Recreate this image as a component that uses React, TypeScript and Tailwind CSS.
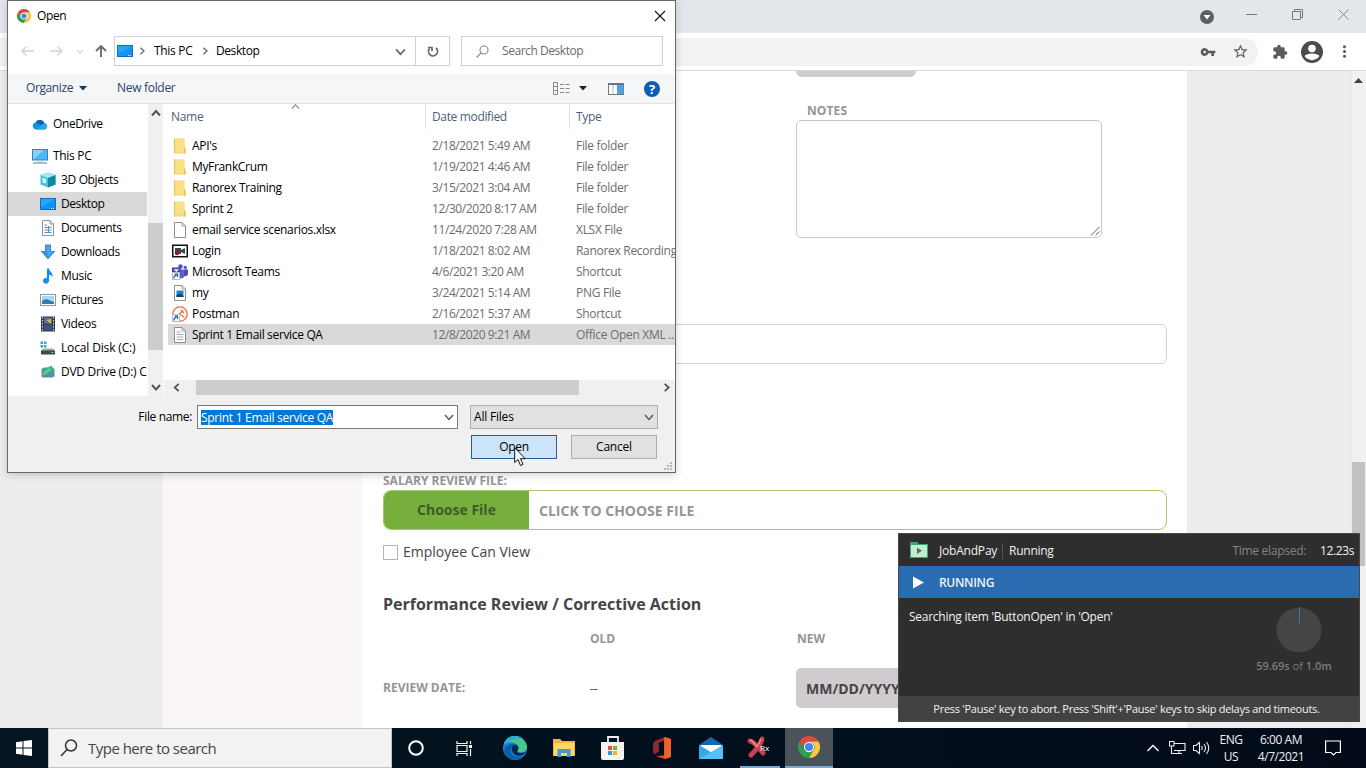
import type { ReactNode } from "react";
import { MdVpnKey, MdStarBorder, MdExtension, MdMoreVert } from "react-icons/md";

function Chrome({ size }: { size: number }) {
  return (
    <svg width={size} height={size} viewBox="0 0 24 24">
      <path fill="#de4a3e" d="M1.6 6A12 12 0 0 1 22.4 6L12 6A6 6 0 0 0 6.8 15Z" />
      <path fill="#2ba24c" d="M1.6 6L6.8 15A6 6 0 0 0 17.2 15L12 24A12 12 0 0 1 1.6 6" />
      <path fill="#fbcb3b" d="M22.4 6A12 12 0 0 1 12 24L17.2 15A6 6 0 0 0 12 6Z" />
      <circle cx="12" cy="12" r="5.6" fill="#fff" />
      <circle cx="12" cy="12" r="4.4" fill="#4285f4" />
    </svg>
  );
}

function Chevron({ dir, color = "#555", size = 9, w = 1.6 }: { dir: "up" | "down" | "left" | "right"; color?: string; size?: number; w?: number }) {
  const d = { up: "M1 7.5L5 3L9 7.5", down: "M1 3L5 7.5L9 3", left: "M7.5 1L3 5L7.5 9", right: "M3 1L7.5 5L3 9" }[dir];
  return (
    <svg width={size} height={size} viewBox="0 0 10 10" fill="none" stroke={color} strokeWidth={w}>
      <path d={d} />
    </svg>
  );
}

function Icon({ children }: { children: ReactNode }) {
  return (
    <svg className="shrink-0" width="16" height="16" viewBox="0 0 16 16">
      {children}
    </svg>
  );
}

const desktopIcon = (
  <Icon>
    <rect x="0" y="2" width="16" height="12" fill="#0d6fc0" />
    <rect x="1" y="3" width="14" height="10" fill="#1494f2" />
    <path d="M1 3H15L1 11Z" fill="#23a7f8" />
    <path d="M11 12.5H12M13 12.5H14" stroke="#fff" strokeWidth="1" />
  </Icon>
);
const oneDriveIcon = (
  <Icon>
    <path d="M4 13.5a3.6 3.6 0 0 1-.4-7.1A5 5 0 0 1 12.400 7 3.400 3.400 0 0 1 13 13.500Z" fill="#1490df" />
    <path d="M3.600 6.400A5 5 0 0 1 12.400 7L9 9Z" fill="#0f5fb4" />
    <path d="M4 13.500L12.400 7.200A3.400 3.400 0 0 1 13 13.500Z" fill="#28a8ea" />
  </Icon>
);
const pcIcon = (
  <Icon>
    <rect x="0.5" y="1.5" width="15" height="10.5" fill="#4db8f5" stroke="#3285b8" />
    <path d="M1 2H12L2 11H1Z" fill="#87d2fb" />
    <path d="M1 15H15" stroke="#557997" />
    <path d="M5 13H11" stroke="#b2c4d0" />
  </Icon>
);
const cubeIcon = (
  <Icon>
    <path d="M8 0.5L15.500 3V12.500L8 15.500L0.500 12.500V3Z" fill="#3fc4d6" />
    <path d="M8 0.5L15.500 3L8 6L0.500 3Z" fill="#a4e9f2" />
    <path d="M8 6L15.500 3V12.500L8 15.500Z" fill="#0e87a0" />
    <path d="M2.500 5.500L6 7V11.500L2.500 10.500Z" fill="#d5f7fa" />
  </Icon>
);
const documentsIcon = (
  <Icon>
    <path d="M2.5 0.5H10L13.5 4V15.5H2.5Z" fill="#fdfdfd" stroke="#8a9299" />
    <path d="M10 0.5V4H13.5" fill="none" stroke="#8a9299" />
    <path d="M4.5 5H7M4.5 7.5H11.5M4.5 10H11.5M4.5 12.5H11.5M8.5 6V13" stroke="#4294cb" />
  </Icon>
);
const downloadIcon = (
  <Icon>
    <path d="M5 0.5H11V7H15.5L8 15.5L0.5 7H5Z" fill="#3a8fd8" />
    <path d="M6 1.5H10V8H13L8 13.5Z" fill="#4aa5ea" />
  </Icon>
);
const musicIcon = (
  <Icon>
    <path d="M7 0.5H9C9.5 4 13.5 4.5 12.5 9.5C12 7.5 11 7 9 7V12.5A3 3 0 1 1 7 10Z" fill="#1490ea" />
  </Icon>
);
const picturesIcon = (
  <Icon>
    <rect x="0.5" y="2.5" width="15" height="11" fill="#fff" stroke="#8c9aa5" />
    <rect x="2" y="4" width="12" height="8" fill="#a8d7f5" />
    <path d="M2 9L6 7L14 10V12H2Z" fill="#3679ad" />
  </Icon>
);
const videosIcon = (
  <Icon>
    <rect x="1" y="0.5" width="14" height="15" fill="#353b45" />
    <path d="M2.5 1V16M13.5 1V16" stroke="#d8dde2" strokeDasharray="1.5 1.5" />
    <rect x="4" y="1.5" width="8" height="6" fill="#566c9e" />
    <rect x="4" y="8.5" width="8" height="6" fill="#3d5080" />
    <path d="M6 4L11 3V8Z" fill="#e2b33f" />
  </Icon>
);
const diskIcon = (
  <Icon>
    <path d="M0.5 1.5H3V4H0.5ZM4 1.5H6.5V4H4ZM0.5 5H3V7.5H0.5ZM4 5H6.5V7.5H4Z" fill="#22add0" />
    <path d="M3 8.5H13L15 11H1Z" fill="#a3a9ad" />
    <rect x="1" y="10.5" width="14" height="4" fill="#43484d" />
    <rect x="11.5" y="12" width="2" height="1" fill="#6be86d" />
  </Icon>
);
const dvdIcon = (
  <Icon>
    <path d="M1.500 5L4 3.500H12L14.500 5V12.500L12 13.500H2.500L1.500 12.500Z" fill="#5a8f9e" />
    <path d="M3 8C4 3.500 8 4.500 11 1.500L12.500 2.500C13 7 9 11 4 9.500Z" fill="#35c07c" />
    <path d="M3 11L10 5" stroke="#8eebc0" strokeWidth="0.900" />
  </Icon>
);

const folderIcon = (
  <Icon>
    <path d="M2 0.5H12.5V10L14 11V15.5H2Z" fill="#f4d26d" />
    <path d="M3 1H12V14.5H3Z" fill="#fbdf85" />
    <path d="M2.500 15.500V0.500M12.500 9V15.500" stroke="#e6c25e" fill="none" />
  </Icon>
);
const sheet = (
  <>
    <path d="M2.5 0.5H10L13.5 4V15.5H2.5Z" fill="#fff" stroke="#8e8e8e" />
    <path d="M10 0.5V4H13.5" fill="none" stroke="#a0a0a0" />
  </>
);
const shortcutMark = (
  <>
    <rect x="0.5" y="8.5" width="7" height="7" fill="#fff" stroke="#bbb" />
    <path d="M2 14.5V13L4.5 10.5M2.5 10H5.5V13" fill="none" stroke="#1f5aa8" strokeWidth="1.2" />
  </>
);
const recIcon = (
  <Icon>
    <rect x="0.75" y="2.25" width="14.5" height="11.5" fill="#fff" stroke="#111" strokeWidth="1.5" />
    <path d="M3 5H9V7L13 5V11L9 9V11H3Z" fill="#444" />
    <circle cx="5" cy="10" r="2.2" fill="#8c1830" />
  </Icon>
);
const teamsIcon = (
  <Icon>
    <circle cx="8.5" cy="2.6" r="2.3" fill="#5059c9" />
    <circle cx="13.3" cy="3.4" r="1.7" fill="#5059c9" />
    <path d="M6 5.5H12.5V12A4 4 0 0 1 5 12Z" fill="#5c62cf" />
    <path d="M12 5.5H16V10A3 3 0 0 1 12 12Z" fill="#444bb0" />
    <rect x="0" y="3.5" width="8.5" height="8.5" fill="#3c43a5" />
    <path d="M2 5.8H6.6M4.3 5.8V10.5" stroke="#fff" strokeWidth="1.2" />
    {shortcutMark}
  </Icon>
);
const pngIcon = (
  <Icon>
    {sheet}
    <rect x="4.5" y="5.5" width="7" height="6.5" fill="#1f82cc" />
    <path d="M4.5 12V10L8 8.5L11.5 11V12Z" fill="#153e66" />
  </Icon>
);
const postmanIcon = (
  <Icon>
    <circle cx="8" cy="8" r="7.2" fill="#fff" stroke="#ec6b3d" strokeWidth="1.3" />
    <path d="M5 10.5L11 4.5M8.5 8.5L12.5 11.5M9 4L12 7" stroke="#ec6b3d" strokeWidth="1.3" />
    {shortcutMark}
  </Icon>
);
const textIcon = (
  <Icon>
    {sheet}
    <path d="M4.5 5H9M4.5 7.5H11.5M4.5 10H11.5M4.5 12.5H11.5" stroke="#a3acb3" />
  </Icon>
);

const places: [ReactNode, string, string][] = [
  [cubeIcon, "3D Objects", "tracking-[-0.35px]"],
  [desktopIcon, "Desktop", "tracking-[-0.42px]"],
  [documentsIcon, "Documents", "tracking-[-0.42px]"],
  [downloadIcon, "Downloads", "tracking-[-0.42px]"],
  [musicIcon, "Music", "tracking-[-0.32px]"],
  [picturesIcon, "Pictures", "tracking-[-0.36px]"],
  [videosIcon, "Videos", "tracking-[-0.32px]"],
  [diskIcon, "Local Disk (C:)", "tracking-[-0.15px]"],
  [dvdIcon, "DVD Drive (D:) C", "tracking-[-0.27px]"],
];

const files: [ReactNode, string, string, string][] = [
  [folderIcon, "API's", "2/18/2021 5:49 AM", "File folder"],
  [folderIcon, "MyFrankCrum", "1/19/2021 4:46 AM", "File folder"],
  [folderIcon, "Ranorex Training", "3/15/2021 3:04 AM", "File folder"],
  [folderIcon, "Sprint 2", "12/30/2020 8:17 AM", "File folder"],
  [<Icon>{sheet}</Icon>, "email service scenarios.xlsx", "11/24/2020 7:28 AM", "XLSX File"],
  [recIcon, "Login", "1/18/2021 8:02 AM", "Ranorex Recording"],
  [teamsIcon, "Microsoft Teams", "4/6/2021 3:20 AM", "Shortcut"],
  [pngIcon, "my", "3/24/2021 5:14 AM", "PNG File"],
  [postmanIcon, "Postman", "2/16/2021 5:37 AM", "Shortcut"],
  [textIcon, "Sprint 1 Email service QA", "12/8/2020 9:21 AM", "Office Open XML ..."],
];

function OpenDialog() {
  return (
    <section className="absolute left-[7px] top-0 flex h-[473px] w-[669px] flex-col overflow-hidden border border-[#68686c] bg-white text-[12px] leading-4 tracking-[-0.3px] text-black shadow-[0_2px_8px_rgba(0,0,0,0.18)]">
      <header className="flex h-[29px] shrink-0 items-center pl-[9px] pr-[9px]">
        <Chrome size={14} />
        <span className="ml-[6px] grow tracking-[-0.4px]">Open</span>
        <svg width="12" height="12" viewBox="0 0 12 12" stroke="#111" strokeWidth="1.1"><path d="M1 1L11 11M11 1L1 11" /></svg>
      </header>
      <div className="mt-[6px] flex h-[30px] shrink-0 items-center">
        <svg className="ml-[12px]" width="94" height="16" viewBox="0 0 94 16" fill="none">
          <path d="M14 8H2M6.5 3.5L2 8L6.5 12.5" stroke="#d4d4d4" strokeWidth="1.4" />
          <path d="M30 8H42M37.500 3.500L42 8L37.500 12.500" stroke="#d4d4d4" strokeWidth="1.400" />
          <path d="M57 7L60 10L63 7" stroke="#d8d8d8" strokeWidth="1.400" />
          <path d="M81 14V3M76 8L81 3L86 8" stroke="#6a6a6a" strokeWidth="1.900" />
        </svg>
        <div className="flex h-[30px] w-[336px] items-center border border-[#d0d0d0]">
          <span className="ml-[2px]">{desktopIcon}</span>
          <span className="ml-[5px] flex w-[16px]"><Chevron dir="right" color="#666" size={8} /></span>
          <span className="w-[47px]">This PC</span>
          <span className="flex w-[15px]"><Chevron dir="right" color="#666" size={8} /></span>
          <span className="grow tracking-[-0.42px]">Desktop</span>
          <Chevron dir="down" color="#666" size={11} />
          <span className="ml-[9px] flex h-full w-[34px] items-center justify-center border-l border-[#d0d0d0]">
            <svg width="12" height="12" viewBox="0 0 12 12" fill="none" stroke="#666" strokeWidth="1.700">
              <path d="M2.500 3.500A4.500 4.500 0 1 0 9 3M1 2.500H5V6" />
            </svg>
          </span>
        </div>
        <div className="ml-[11px] flex h-[30px] w-[202px] items-center border border-[#d0d0d0] text-[#6b6b6b]">
          <svg className="ml-[14px] mr-[13px]" width="13" height="13" viewBox="0 0 13 13" fill="none" stroke="#888" strokeWidth="1.100">
            <circle cx="8" cy="5" r="4" /><path d="M5 8L0.500 12.500" />
          </svg>
          <span className="tracking-[-0.45px]">Search Desktop</span>
        </div>
      </div>
      <div className="mt-2 flex h-[30px] shrink-0 items-center border-b border-[#e2e4e6] bg-[#f5f6f7] text-[#2a4468]">
        <span className="ml-[18px] w-[53px] -translate-y-px tracking-[-0.4px]">Organize</span>
        <svg width="8" height="5" viewBox="0 0 8 5"><path d="M0 0H8L4 4.500Z" fill="#1c3659" /></svg>
        <span className="ml-[30px] grow -translate-y-px tracking-[-0.3px]">New folder</span>
        <svg width="17" height="13" viewBox="0 0 17 13" fill="none" stroke="#888">
          <path d="M0.500 0.500H4.500V12.500H0.500ZM0.500 4.500H4.500M0.500 8.500H4.500" />
          <path d="M7 2.500H17M7 6.500H17M7 10.500H17" strokeDasharray="4 1.500" />
        </svg>
        <svg className="ml-[9px]" width="8" height="5" viewBox="0 0 8 5"><path d="M0 0H8L4 4.500Z" fill="#222" /></svg>
        <svg className="ml-[21px]" width="17" height="12" viewBox="0 0 17 12">
          <rect x="0.500" y="0.500" width="15" height="11" fill="#fff" stroke="#777" />
          <path d="M0 1.500H16" stroke="#56748c" />
          <path d="M5 2V11" stroke="#bbb" />
          <rect x="9" y="2" width="6.500" height="9" fill="#4da3e2" />
        </svg>
        <span className="ml-[19px] mr-[15px] flex size-4 items-center justify-center rounded-full bg-[#0b5cb5] text-[13px] font-bold text-white">?</span>
      </div>
      <div className="flex h-[292px] shrink-0">
        <nav className="w-[139px] shrink-0 overflow-hidden whitespace-nowrap pt-2">
          <div className="flex h-6 items-center gap-[5px] pl-6">{oneDriveIcon}<span className="tracking-[-0.4px]">OneDrive</span></div>
          <div className="mt-2 flex h-6 items-center gap-[5px] pl-6">{pcIcon}<span>This PC</span></div>
          {places.map(([icon, name, track]) => (
            <div key={name} className={`flex h-6 items-center gap-[5px] pl-8 ${name === "Desktop" ? "bg-[#d9d9d9]" : ""}`}>
              {icon}<span className={track}>{name}</span>
            </div>
          ))}
        </nav>
        <div className="ml-[1px] flex w-[15px] shrink-0 flex-col items-center bg-[#f0f0f0] py-1">
          <Chevron dir="up" size={10} w={2} />
          <div className="mt-[105px] h-[127px] w-full bg-[#cdcdcd]" />
          <div className="mt-auto flex"><Chevron dir="down" size={10} w={2} /></div>
        </div>
        <div className="relative ml-[1px] flex min-w-0 grow flex-col">
          <div className="absolute left-[127px] top-[-2px]"><Chevron dir="up" size={9} color="#777" w={1.200} /></div>
          <div className="flex h-[25px] items-stretch text-[#4c607a]">
            <span className="w-[262px] border-r border-[#e0e0e0] pl-[7px] pt-[5px] tracking-[-0.3px]">Name</span>
            <span className="w-[144px] border-r border-[#e0e0e0] pl-[6px] pt-[5px] tracking-[-0.35px]">Date modified</span>
            <span className="pl-[6px] pt-[5px]">Type</span>
          </div>
          <ul className="pt-[6px]">
            {files.map(([icon, name, date, type], i) => (
              <li key={name} className={`ml-1 flex h-[21px] items-center whitespace-nowrap ${i === 9 ? "bg-[#d9d9d9]" : ""}`}>
                <span className="ml-1">{icon}</span>
                <span className="ml-1 w-[240px] shrink-0 tracking-[-0.34px]">{name}</span>
                <span className="w-[144px] shrink-0 tracking-[-0.41px] text-[#6d6d6d]">{date}</span>
                <span className="tracking-[-0.3px] text-[#6d6d6d]">{type}</span>
              </li>
            ))}
          </ul>
          <div className="mt-auto flex h-4 items-start bg-[#f0f0f0] pl-2 pr-1">
            <span className="mt-[3px] flex"><Chevron dir="left" size={9} w={2} /></span>
            <div className="ml-[15px] h-[15px] w-[383px] bg-[#cdcdcd]" />
            <div className="ml-auto mt-[3px] flex"><Chevron dir="right" size={9} w={2} /></div>
          </div>
        </div>
      </div>
      <footer className="relative grow bg-[#f0f0f0] pt-[9px]">
        <div className="flex items-center">
          <label className="w-[184px] text-right tracking-[-0.35px]">File name:</label>
          <div className="ml-[5px] flex h-6 w-[261px] items-center border border-[#7a7a7a] bg-white pl-[3px] pr-[3px]">
            <span className="mt-px bg-[#0078d7] leading-[15px] tracking-[-0.28px] text-white">Sprint 1 Email service QA</span>
            <span className="ml-auto"><Chevron dir="down" size={10} w={1.300} /></span>
          </div>
          <div className="ml-[12px] flex h-6 w-[188px] items-center justify-between border border-[#adadad] bg-[#e1e1e1] pl-[3px] pr-[3px]">
            <span className="tracking-[-0.2px]">All Files</span><Chevron dir="down" size={10} w={1.300} />
          </div>
        </div>
        <div className="mt-[6px] flex pl-[463px]">
          <button className="h-6 w-[86px] border border-[#2a5c92] bg-[#cce4f7] leading-[14px] tracking-[-0.3px]">Open</button>
          <button className="ml-[14px] h-6 w-[86px] border border-[#adadad] bg-[#e1e1e1] leading-[14px] tracking-[-0.2px]">Cancel</button>
        </div>
        <svg className="absolute bottom-[1px] right-[2px]" width="9" height="9" viewBox="0 0 9 9" fill="#b8b8b8">
          <path d="M6 0H8V2H6ZM3 3H5V5H3ZM6 3H8V5H6ZM0 6H2V8H0ZM3 6H5V8H3ZM6 6H8V8H6Z" />
        </svg>
      </footer>
    </section>
  );
}

function RunnerPanel() {
  return (
    <section className="absolute left-[898px] top-[533px] flex h-[189px] w-[462px] flex-col border border-[#484848] bg-[#2e2e2e] text-[12px] leading-4 text-[#f2f2f2]">
      <header className="flex h-8 shrink-0 items-center pl-[11px] pr-[5px] pt-px">
        <svg className="-mt-[3px]" width="18" height="17" viewBox="0 0 18 17">
          <path d="M0 1H7L9 3H18V17H0Z" fill="#3aa76d" /><rect x="1" y="4" width="16" height="12" fill="#c4ecd3" />
          <path d="M7 6.500V13L12 9.700Z" fill="#49795c" />
        </svg>
        <span className="ml-[11px] w-[64px] border-r border-[#555] tracking-[-0.2px]">JobAndPay</span>
        <span className="ml-[6px] grow tracking-[-0.25px]">Running</span>
        <span className="mr-[14px] tracking-[-0.28px] text-[#858585]">Time elapsed:</span>
        <span className="tracking-[-0.4px]">12.23s</span>
      </header>
      <div className="flex h-8 shrink-0 items-center bg-[#2a6cb2] pl-[14px]">
        <svg width="11" height="13" viewBox="0 0 11 13"><path d="M0 0.500V12.500L11 6.500Z" fill="#fff" /></svg>
        <span className="ml-[15px] mt-px font-semibold tracking-[-0.300px]">RUNNING</span>
      </div>
      <div className="flex grow justify-between pl-[10px] pt-[9px]">
        <span className="pt-[2px] tracking-[-0.26px]">Searching item 'ButtonOpen' in 'Open'</span>
        <div className="flex w-[120px] flex-col items-center text-[11px] font-semibold text-[#7c7c7c]">
          <svg width="46" height="46" viewBox="0 0 46 46"><circle cx="23" cy="23" r="22.500" fill="#454545" /><path d="M23.500 0V16" stroke="#397ba8" /></svg>
          <span className="mr-[10px] mt-[5px]">59.69s <span className="font-normal">of</span> 1.0m</span>
        </div>
      </div>
      <footer className="flex h-[25px] shrink-0 items-center justify-center bg-[#424242] text-[11px] tracking-[-0.27px]">
        <span className="-ml-[5px]">Press 'Pause' key to abort. Press 'Shift'+'Pause' keys to skip delays and timeouts.</span>
      </footer>
    </section>
  );
}

function BrowserChrome() {
  return (
    <>
      <div className="flex h-[33px] shrink-0 items-start justify-end bg-[#e2e7ec] pt-[9px] text-[#777]">
        <svg width="14" height="15" viewBox="0 0 14 15"><circle cx="7" cy="8" r="7" fill="#5c6064" /><path d="M3.500 6H10.500L7 10.500Z" fill="#fff" /></svg>
        <svg className="ml-[32px] mt-[5px]" width="11" height="1"><path d="M0 0.500H11" stroke="#777" /></svg>
        <svg className="ml-[35px]" width="11" height="11" fill="none" stroke="#777"><path d="M0.500 2.500H8.500V10.500H0.500ZM2.500 2V0.500H10.500V8.500H9" /></svg>
        <svg className="ml-[35px] mr-[17px]" width="11" height="11" stroke="#888"><path d="M0.500 0.500L10.500 10.500M10.500 0.500L0.500 10.500" /></svg>
      </div>
      <div className="flex h-[38px] shrink-0 items-center border-b border-[#d9d9d9] bg-white pr-[14px] text-[#5b5b5b]">
        <div className="flex h-[28px] grow items-center justify-end gap-4 rounded-r-full bg-[#f2f2f2] pr-[9px]">
          <MdVpnKey size={16} /><MdStarBorder size={17} />
        </div>
        <MdExtension className="ml-[14px]" size={16} />
        <svg className="ml-[13px]" width="22" height="22" viewBox="0 0 22 22">
          <circle cx="11" cy="11" r="11" fill="#4c4c4c" /><circle cx="11" cy="7.500" r="3.800" fill="#fff" />
          <path d="M3.500 15C6 11.500 16 11.500 18.500 15C15 20.500 7 20.500 3.500 15Z" fill="#fff" />
        </svg>
        <MdMoreVert className="ml-[12px] mr-[-2px]" size={19} />
      </div>
    </>
  );
}

function Page() {
  return (
    <div className="flex h-[657px] shrink-0 bg-[#ededed]">
      <aside className="ml-[163px] w-[199px] shrink-0 bg-[#fbf7f8]" />
      <main className="flex w-[825px] shrink-0 flex-col overflow-hidden bg-white pl-[21px] pr-5 text-[#959595]">
        <div className="ml-[413px] h-[6px] w-[120px] shrink-0 rounded-b-md bg-[#d0cccf]" />
        <div className="ml-[424px] mt-[26px] text-[12px] font-bold leading-4 tracking-[0.1px]">NOTES</div>
        <div className="ml-[413px] mt-[1px] flex h-[118px] w-[306px] shrink-0 items-end justify-end rounded-[5px] border border-[#c9c9c9] p-[1px]">
          <svg width="10" height="10" stroke="#666"><path d="M1 9.500L9.500 1M5.500 9.500L9.500 5.500" /></svg>
        </div>
        <div className="mt-[86px] h-10 w-[784px] shrink-0 rounded-[6px] border border-[#d0d0d0]" />
        <div className="mt-[109px] text-[12px] font-bold leading-4 tracking-[0.01px]">SALARY REVIEW FILE:</div>
        <div className="mt-[1px] flex h-10 w-[784px] shrink-0 items-center overflow-hidden rounded-[8px] border border-[#a8c964] font-bold">
          <div className="flex h-full w-[145px] items-center justify-center bg-[#76af3b] pb-px text-[14px] text-[#3d5c2a]">Choose File</div>
          <span className="ml-[10px] text-[14px]">CLICK TO CHOOSE FILE</span>
        </div>
        <div className="mt-[12px] flex h-5 items-center gap-[5px] text-[14px] text-[#444]">
          <span className="size-[15px] border border-[#b5b5b5] bg-white" /><span className="-mt-[2px]">Employee Can View</span>
        </div>
        <h2 className="mt-[30px] text-[16px] font-bold leading-6 text-[#454545]">Performance Review / Corrective Action</h2>
        <div className="mt-[15px] grid grid-cols-[207px_207px_1fr] text-[12px] font-bold leading-4">
          <span /><span>OLD</span><span>NEW</span>
        </div>
        <div className="mt-[21px] grid h-10 shrink-0 grid-cols-[207px_206px_1fr] items-center text-[12px] font-bold">
          <span>REVIEW DATE:</span><span className="pt-[2px] font-normal text-[#333]">--</span>
          <span className="flex h-10 w-[250px] items-center rounded-[5px] bg-[#d0cbcf] pl-[10px] text-[14px] text-[#454545]">MM/DD/YYYY</span>
        </div>
      </main>
      <div className="ml-auto flex w-4 flex-col items-center border-l border-[#e6e6e6] bg-[#f1f1f1] pr-px pt-[7px]">
        <svg width="9" height="5" viewBox="0 0 9 5"><path d="M0 5L4.500 0L9 5Z" fill="#444" /></svg>
        <div className="mt-[379px] h-[104px] w-[13px] bg-[#c1c1c1]" />
      </div>
    </div>
  );
}

function Slot({ children, className = "w-[49px]" }: { children: ReactNode; className?: string }) {
  return <div className={`flex h-full items-center justify-center ${className}`}>{children}</div>;
}

function Taskbar() {
  return (
    <div className="flex h-10 shrink-0 items-center bg-[linear-gradient(90deg,#03161f,#020f1d_60%,#030b18)] text-[12px] text-[#f0f0f0]">
      <Slot className="w-12">
        <svg width="16" height="16" viewBox="0 0 16 16" fill="#fff"><path d="M0 2.200L6.500 1.300V7.500H0ZM7.500 1.100L16 0V7.500H7.500ZM0 8.500H6.500V14.700L0 13.800ZM7.500 8.500H16V16L7.500 14.900Z" /></svg>
      </Slot>
      <div className="flex h-full w-[344px] items-center border border-[#c4c4c4] bg-[#f2f2f2] pl-[11px] text-[15px] text-[#464646]">
        <svg width="18" height="18" viewBox="0 0 18 18" fill="none" stroke="#333" strokeWidth="1.500"><circle cx="11" cy="6.500" r="5.500" /><path d="M7 10.500L1 17" /></svg>
        <span className="ml-[10px] tracking-[-0.52px]">Type here to search</span>
      </div>
      <Slot className="w-12"><svg width="16" height="16" fill="none" stroke="#fff" strokeWidth="2"><circle cx="8" cy="8" r="6.800" /></svg></Slot>
      <Slot className="w-12">
        <svg width="16" height="16" fill="none" stroke="#f4f4f4" strokeWidth="1.200">
          <path d="M1 1V3.500H11V1M1 5.500H11V11.500H1ZM1 16V13.500H11V16M14.500 1V4M14.500 9V16" /><path d="M13.500 5.500H15.500V7.500H13.500Z" fill="#fff" />
        </svg>
      </Slot>
      <Slot className="w-[53px]">
        <svg width="24" height="24" viewBox="0 0 24 24">
          <circle cx="12" cy="12" r="12" fill="#1683d6" />
          <path d="M1 8C4 -2 20 -3 24 10C24.500 15 20 17 15 16C13.500 15 16 14 15.500 11C14 6 6 5 1 8Z" fill="#46c98b" />
          <path d="M1 8C4 -2 15 -2 20 3C15 2 8 3 5 7Z" fill="#2caed0" />
          <path d="M9 12C5 19 13 22 20 20C14 26 3 25 1 15C2 8 12 6 15 10C12 8 9 10 9 12Z" fill="#0c5dae" />
          <path d="M9 12C9 8 15 8 15.500 12C15 14 13.500 15 15 16.500C18 17.500 21 17 23 15.500C20 22 8 21 9 12Z" fill="#06264b" />
        </svg>
      </Slot>
      <Slot className="w-[46px]">
        <svg width="22" height="20" viewBox="0 0 22 20"><path d="M0 1H7L9 3H22V18H0Z" fill="#f2b93c" /><path d="M1 5H21V18H1Z" fill="#fbd95d" /><path d="M4.500 19V11H17.500V19H14V15H8V19Z" fill="#4896d5" /></svg>
      </Slot>
      <Slot className="w-[51px]">
        <svg width="23" height="24" viewBox="0 0 23 24"><path d="M7 6V1H17V6" fill="none" stroke="#eee" strokeWidth="1.800" /><path d="M0 6H23V22Q23 24 21 24H2Q0 24 0 22Z" fill="#f4f4f4" /><path d="M7 10H11V14H7Z" fill="#e6512e" /><path d="M12 10H16V14H12Z" fill="#78b52b" /><path d="M7 15H11V19H7Z" fill="#209de1" /><path d="M12 15H16V19H12Z" fill="#f5ae19" /></svg>
      </Slot>
      <Slot className="w-[47px]">
        <svg width="20" height="22" viewBox="0 0 20 22"><path d="M13 0L19 2V20L13 22L4 19L12 18.500V3.500L6.500 5.500V14.500L2 17V5.500Z" fill="#e64a23" /><path d="M12 0.500L4 3.500Q1 5 1 8V14Q1 17.500 4 16.500L6.500 14.500V5.500L12 3.500Z" fill="#8f2a35" /><path d="M12.500 0.200L19 2V20L12.500 21.800Z" fill="#f1602a" /></svg>
      </Slot>
      <Slot className="w-[52px]">
        <svg width="24" height="22" viewBox="0 0 24 22"><path d="M0 8L12 0L24 8V22H0Z" fill="#1469ae" /><path d="M2 8H22V15L12 20L2 15Z" fill="#f3f6f8" /><path d="M0 8L24 22H0Z" fill="#35a9e8" /><path d="M24 8L0 22H24Z" fill="#53c1f5" /><path d="M1 8H23L12 15Z" fill="#fff" /></svg>
      </Slot>
      <div className="ml-[3px] flex h-full w-10 items-center justify-center border-b-2 border-[#76a9d8]">
        <div className="relative mr-1 h-6 w-6">
          <svg width="24" height="24" viewBox="0 0 24 24"><path d="M4 6C7 6 13 13 17 18M16 4C15 9 10 15 5 20" stroke="#c93f4c" strokeWidth="5" strokeLinecap="round" fill="none" /><path d="M4 5C7 6 9 9 11 12M15 4L11 12" stroke="#f08b90" strokeWidth="1.500" fill="none" /></svg>
          <span className="absolute left-[14px] top-[9px] text-[8px] leading-[8px] text-white">Rx</span>
        </div>
      </div>
      <div className="ml-[5px] flex h-full w-12 items-center justify-center border-b-2 border-[#76a9d8] bg-[#4a535a]"><Chrome size={22} /></div>
      <div className="ml-auto flex items-center">
        <svg width="12" height="8" fill="none" stroke="#fff" strokeWidth="1.300"><path d="M0.500 7L6 1.500L11.500 7" /></svg>
        <svg className="ml-[10px]" width="17" height="14" fill="none" stroke="#eee" strokeWidth="1.100"><path d="M5 2.500H16V9.500H5M2.500 5V12.500H13M10 9.500V12.500M0.500 0.500H5V5H0.500Z" /></svg>
        <svg className="ml-[7px]" width="17" height="14" fill="none" stroke="#eee" strokeWidth="1.100"><path d="M0.500 4.500H3L6.500 1.500V12.500L3 9.500H0.500ZM8.500 5Q10 7 8.500 9M11 3Q14 7 11 11M13.500 1Q18 7 13.500 13" /></svg>
        <div className="ml-[7px] w-[28px] text-center leading-[17px] tracking-[-0.500px]">ENG<br />US</div>
        <div className="ml-[10px] w-[52px] whitespace-nowrap text-center leading-[17px] tracking-[-0.450px]">6:00 AM<br />4/7/2021</div>
        <svg className="ml-[18px] mr-[25px]" width="16" height="16" fill="none" stroke="#fff" strokeWidth="1.200"><path d="M0.600 1H15.400V12.500H11L8.500 15L6 12.500H0.600Z" /></svg>
      </div>
    </div>
  );
}

export default function App() {
  return (
    <div className="relative flex h-[768px] w-[1366px] flex-col overflow-hidden bg-white font-['Open_Sans','Noto_Sans',sans-serif]">
      <BrowserChrome />
      <Page />
      <Taskbar />
      <OpenDialog />
      <RunnerPanel />
      <svg className="absolute left-[514px] top-[447px]" width="12" height="20" viewBox="0 0 12 20">
        <path d="M0.700 0.800V15.500L4 12.500L6.500 18.500L9 17.400L6.500 11.700H11.200Z" fill="#fff" stroke="#111" />
      </svg>
    </div>
  );
}
